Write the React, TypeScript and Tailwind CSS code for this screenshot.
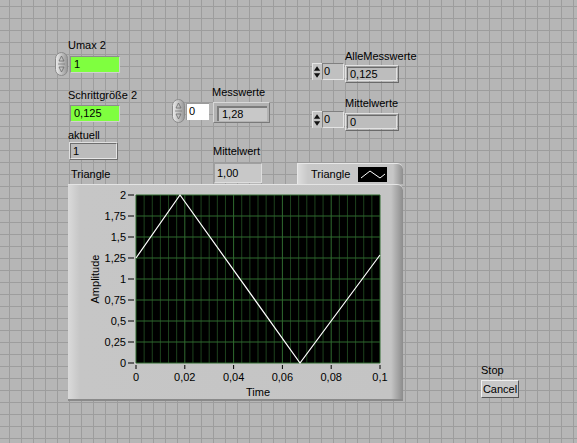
const minorX = Array.from({ length: 31 }, (_, i) => (244 / 30) * i)
const majorY = Array.from({ length: 9 }, (_, i) => 21 * i)
const yLabels = ['2', '1,75', '1,5', '1,25', '1', '0,75', '0,5', '0,25', '0']
const xLabels = ['0', '0,02', '0,04', '0,06', '0,08', '0,1']
const svgFont = 'Liberation Sans, Arial, sans-serif'

function Label({ text, className = '' }: { text: string; className?: string }) {
  return <div className={`text-[11px] leading-[13px] text-black whitespace-nowrap ${className}`}>{text}</div>
}

// runde Inkrement-Taste (LabVIEW classic)
function RoundSpinner() {
  return (
    <svg width="13" height="24" viewBox="0 0 13 24" className="shrink-0">
      <defs>
        <linearGradient id="sp" x1="0" x2="1">
          <stop offset="0" stopColor="#ececec" />
          <stop offset="1" stopColor="#969696" />
        </linearGradient>
      </defs>
      <rect x="0.5" y="0.5" width="12" height="23" rx="6" fill="url(#sp)" stroke="#8a8a8a" />
      <path d="M6.5 4 L9 9 L4 9 Z" fill="none" stroke="#6a6a6a" strokeWidth="0.8" />
      <path d="M6.5 20 L9 15 L4 15 Z" fill="none" stroke="#6a6a6a" strokeWidth="0.8" />
      <line x1="3" y1="12" x2="10" y2="12" stroke="#7a7a7a" strokeWidth="0.8" />
    </svg>
  )
}

function SmallSpinner({ className = '' }: { className?: string }) {
  return (
    <div className={`flex h-[17px] ${className}`}>
      <svg width="10" height="17" viewBox="0 0 10 17" className="bg-[#c4c4c4] border-l border-t border-[#e6e6e6]">
        <path d="M4.5 2 L8 7 L1 7 Z" fill="#111" />
        <path d="M4.5 15 L8 10 L1 10 Z" fill="#111" />
      </svg>
      <div className="w-[22px] border border-t-[#808080] border-l-[#808080] border-b-[#e4e4e4] border-r-[#e4e4e4] bg-[#c0c0c0] text-[11px] leading-[15px] pl-[1px]">
        0
      </div>
    </div>
  )
}

function GreenField({ value, className = '' }: { value: string; className?: string }) {
  return (
    <div className={`w-[50px] h-[17px] bg-[#7fff3f] border border-t-[#8c8c8c] border-l-[#8c8c8c] border-b-[#d0d0d0] border-r-[#d0d0d0] text-[11px] leading-[15px] pl-[3px] ${className}`}>
      {value}
    </div>
  )
}

function DoubleBox({ value, className = '' }: { value: string; className?: string }) {
  return (
    <div className={`w-[54px] h-[18px] border border-t-[#e2e2e2] border-l-[#e2e2e2] border-b-[#6a6a6a] border-r-[#6a6a6a] p-[1px] ${className}`}>
      <div className="h-full border border-t-[#6a6a6a] border-l-[#6a6a6a] border-b-[#e2e2e2] border-r-[#e2e2e2] bg-[#bdbdbd] text-[11px] leading-[12px] pl-[2px]">
        {value}
      </div>
    </div>
  )
}

export default function App() {
  return (
    <div className="relative w-[577px] h-[443px] overflow-hidden bg-[#b6b6b6] bg-[linear-gradient(to_right,#9d9d9d_1px,transparent_1px),linear-gradient(to_bottom,#9d9d9d_1px,transparent_1px)] bg-[length:12px_12px] bg-[position:9px_6px] font-['Liberation_Sans',Arial,sans-serif]">
      {/* linke Spalte: Umax 2, Schrittgröße 2, aktuell */}
      <div className="absolute left-[55px] top-[39px] flex flex-col">
        <Label text="Umax 2" className="ml-[13px]" />
        <div className="flex items-center gap-[2px]">
          <RoundSpinner />
          <GreenField value="1" />
        </div>
        <Label text="Schrittgröße 2" className="ml-[13px] mt-[13px]" />
        <GreenField value="0,125" className="ml-[15px] mt-[3px]" />
        <Label text="aktuell" className="ml-[13px] mt-[7px]" />
        <div className="ml-[14px] w-[49px] h-[18px] border border-t-[#e0e0e0] border-l-[#e0e0e0] border-b-[#6e6e6e] border-r-[#6e6e6e]">
          <div className="h-full border border-t-[#6e6e6e] border-l-[#6e6e6e] border-b-[#e6e6e6] border-r-[#e6e6e6] bg-[#bcbcbc] text-[11px] leading-[14px] pl-[2px]">
            1
          </div>
        </div>
        <Label text="Triangle" className="ml-[16px] mt-[8px]" />
      </div>

      {/* Mitte: Messwerte, Mittelwert */}
      <div className="absolute left-[172px] top-[86px] flex flex-col">
        <div className="flex items-start">
          <div className="mt-[13px] flex items-center gap-[1px]">
            <RoundSpinner />
            <div className="w-[23px] h-[17px] bg-white border-l border-t border-[#9a9a9a] text-[11px] leading-[15px] pl-[2px]">0</div>
          </div>
          <div className="ml-[3px] flex flex-col">
            <Label text="Messwerte" />
            <div className="ml-[1px] mt-[3px] w-[57px] h-[21px] bg-[#b2b2b2] border border-t-[#d8d8d8] border-l-[#d8d8d8] border-b-[#7a7a7a] border-r-[#7a7a7a] pl-[3px] pt-[3px] pr-[2px] pb-[1px]">
              <div className="h-full bg-[#c8c8c8] border-t-2 border-l-2 border-[#7c7c7c] text-[11px] leading-[13px] pl-[3px]">1,28</div>
            </div>
          </div>
        </div>
        <Label text="Mittelwert" className="ml-[41px] mt-[22px]" />
        <div className="ml-[42px] mt-[5px] w-[48px] h-[20px] bg-[#c8c8c8] border border-t-[#a0a0a0] border-l-[#a0a0a0] border-b-[#dedede] border-r-[#dedede] text-[11px] leading-[18px] pl-[2px]">
          1,00
        </div>
      </div>

      {/* rechts: AlleMesswerte, Mittelwerte */}
      <div className="absolute left-[312px] top-[50px] flex flex-col">
        <div className="flex items-start gap-[1px]">
          <SmallSpinner className="mt-[13px]" />
          <div className="flex flex-col">
            <Label text="AlleMesswerte" />
            <DoubleBox value="0,125" className="mt-[2px]" />
          </div>
        </div>
        <div className="mt-[14px] flex items-start gap-[1px]">
          <SmallSpinner className="mt-[14px]" />
          <div className="flex flex-col">
            <Label text="Mittelwerte" />
            <DoubleBox value="0" className="mt-[3px]" />
          </div>
        </div>
      </div>

      {/* Graph mit Legende */}
      <div className="absolute left-[68px] top-[163px] w-[335px] flex flex-col">
        <div className="self-end w-[106px] h-[21px] flex items-center gap-[8px] pl-[13px] rounded-tr-[6px] bg-[linear-gradient(to_right,#dcdcdc_0px,#c8c8c8_10px,#c6c6c6_calc(100%_-_10px),#8e8e8e_100%)] border-t border-l border-[#e8e8e8]">
          <span className="text-[11px] leading-[13px]">Triangle</span>
          <svg width="29" height="15" viewBox="0 0 29 15" className="bg-black">
            <polyline points="3,11 12,4 22,11 27,7" fill="none" stroke="white" strokeWidth="1" />
          </svg>
        </div>
        <div className="h-[217px] rounded-tr-[6px] bg-[linear-gradient(to_right,#dadada_0px,#c6c6c6_12px,#c4c4c4_calc(100%_-_12px),#8c8c8c_100%)] border-t border-[#e4e4e4] border-b-2 border-b-[#8a8a8a]">
          <svg width="335" height="214" className="block">
            <g transform="translate(68,10)">
              <rect width="244" height="168" fill="#000" />
              {minorX.map((x, i) => (
                <line key={'v' + i} x1={x} y1={0} x2={x} y2={168} stroke={i % 6 === 0 ? '#2f6a2f' : '#1d421d'} strokeWidth="1" />
              ))}
              {majorY.map((y, i) => (
                <line key={'h' + i} x1={0} y1={y} x2={244} y2={y} stroke="#2f6a2f" strokeWidth="1" />
              ))}
              <polyline points="0,63 44,0 164,168 244,60" fill="none" stroke="#fff" strokeWidth="1.2" />
            </g>
            {yLabels.map((t, i) => (
              <g key={t}>
                <line x1={60} y1={10 + i * 21} x2={66} y2={10 + i * 21} stroke="#000" />
                <text x={58} y={14 + i * 21} textAnchor="end" fontSize="11" fontFamily={svgFont}>
                  {t}
                </text>
              </g>
            ))}
            {xLabels.map((t, i) => (
              <g key={t}>
                <line x1={68 + i * 48.8} y1={180} x2={68 + i * 48.8} y2={184} stroke="#000" />
                <text x={68 + i * 48.8} y={196} textAnchor="middle" fontSize="11" fontFamily={svgFont}>
                  {t}
                </text>
              </g>
            ))}
            <text x={190} y={211} textAnchor="middle" fontSize="11" fontFamily={svgFont}>
              Time
            </text>
            <text x={31} y={94} textAnchor="middle" fontSize="11" fontFamily={svgFont} transform="rotate(-90 31 94)">
              Amplitude
            </text>
          </svg>
        </div>
      </div>

      {/* Stop */}
      <div className="absolute left-[481px] top-[364px] flex flex-col gap-[3px]">
        <Label text="Stop" />
        <button className="w-[38px] h-[18px] bg-[#c8c8c8] border border-t-[#f0f0f0] border-l-[#f0f0f0] border-b-[#555] border-r-[#555] text-[11px] leading-[14px] text-black">
          Cancel
        </button>
      </div>
    </div>
  )
}
